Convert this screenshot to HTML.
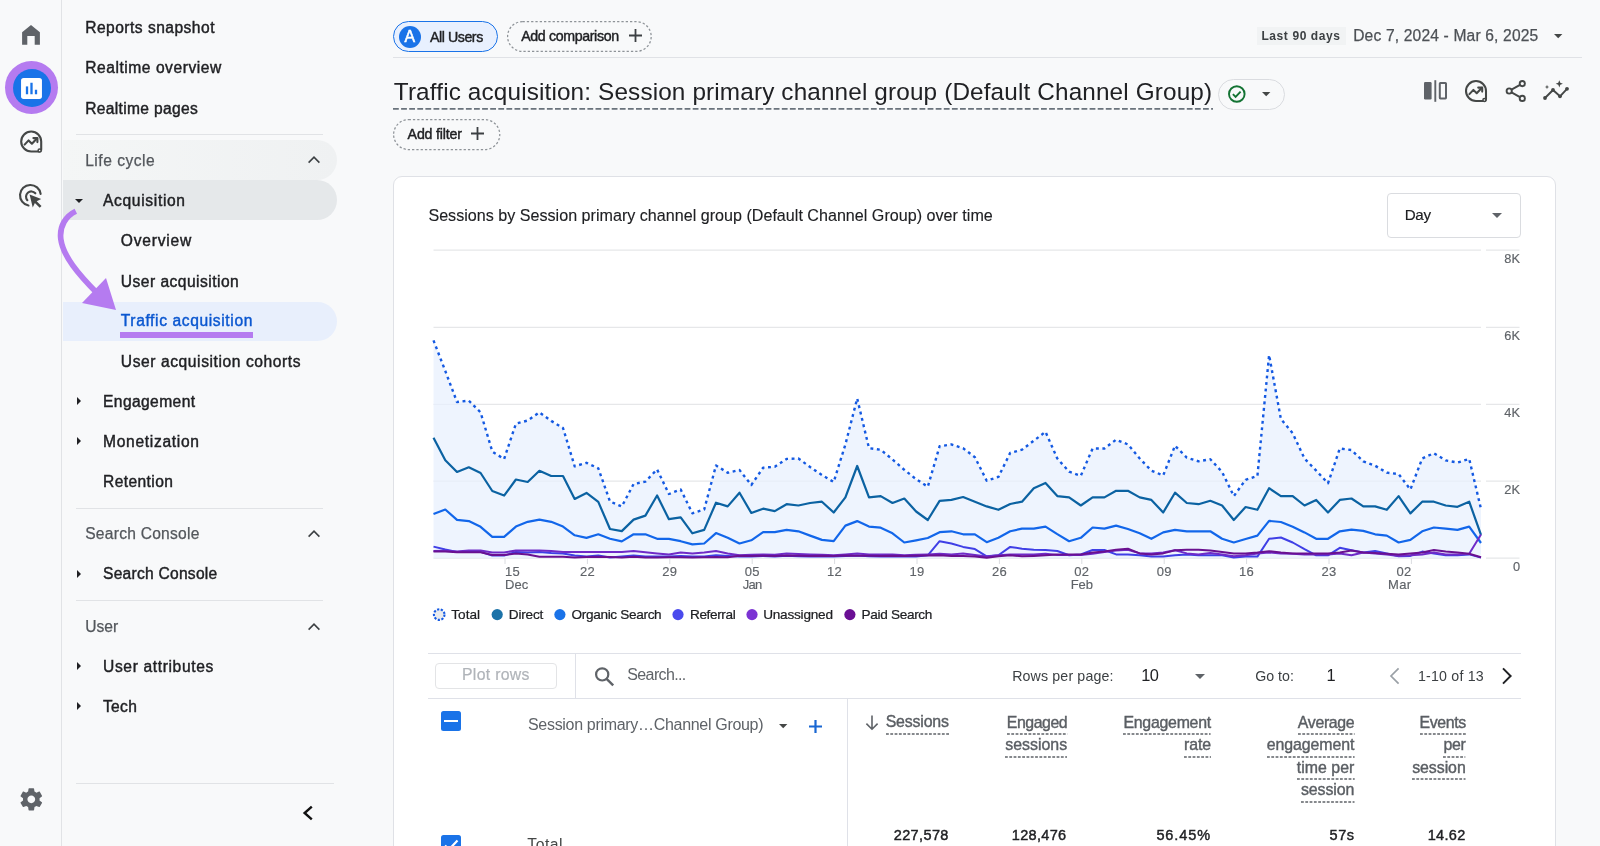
<!DOCTYPE html>
<html lang="en">
<head>
<meta charset="utf-8">
<title>Traffic acquisition</title>
<style>
*{box-sizing:border-box;margin:0;padding:0}
html,body{width:1600px;height:846px;overflow:hidden;background:#f8f9fa;font-family:"Liberation Sans",sans-serif;color:#202124}
#app{position:relative;width:1600px;height:846px;overflow:hidden;background:#f8f9fa;will-change:transform}
.abs{position:absolute}
.t{position:absolute;white-space:nowrap;line-height:1}
#rail{position:absolute;left:0;top:0;width:62.3px;height:846px;border-right:1.2px solid #e1e3e6}
.hr{position:absolute;height:1.3px;background:#e1e3e6}
.tri{position:absolute;width:0;height:0;border-style:solid}
.tri.r{border-width:4px 0 4px 4.5px;border-color:transparent transparent transparent #202124}
.tri.d{border-width:4.5px 4px 0 4px;border-color:#202124 transparent transparent transparent}
svg{overflow:visible}
</style>
</head>
<body>
<div id="app">
<div id="rail">
<svg class="abs" style="left:19px;top:23px" width="24" height="24" viewBox="0 0 24 24"><path d="M3.1 21.7V9.2L12 1.9l8.9 7.3v12.5h-5.2v-8.6H8.3v8.6z" fill="#5f6368"/></svg>
<div class="abs" style="left:5px;top:61px;width:53px;height:53px;border-radius:50%;background:#b57bf0"></div>
<div class="abs" style="left:12.5px;top:68.5px;width:38px;height:38px;border-radius:50%;background:#1a73e8"></div>
<svg class="abs" style="left:19.6px;top:76.6px" width="23" height="23" viewBox="0 0 22 22"><rect x="1" y="1" width="20" height="20" rx="2.5" fill="#fff"/><rect x="5.6" y="9" width="2.2" height="7.5" fill="#1a73e8"/><rect x="9.9" y="5.5" width="2.2" height="11" fill="#1a73e8"/><rect x="14.2" y="12.2" width="2.2" height="4.3" fill="#1a73e8"/></svg>
<svg class="abs" style="left:17px;top:127px" width="30" height="30" viewBox="17 127 30 30" fill="none" stroke="#444746" stroke-width="2.1" stroke-linecap="round" stroke-linejoin="round"><path d="M41.2 141.5a10 10 0 1 0-10 10h7.8a2.2 2.2 0 0 0 2.2-2.2z"/><path d="M24.6 144.6l4-4.2 3.3 3.3 5.2-5.4"/><path d="M33.4 138.1h4v4"/><circle cx="39.6" cy="150.6" r="1.5" fill="#f8f9fa" stroke-width="1.5"/></svg>
<svg class="abs" style="left:17.4px;top:181.6px" width="27" height="27" viewBox="0 0 24 24" fill="none" stroke="#444746" stroke-width="1.9" stroke-linecap="round"><path d="M10.2 20.9A9.2 9.2 0 1 1 21 10.6"/><path d="M9.2 16.2A4.6 4.6 0 1 1 16.3 10"/><path d="M11.2 11.2l10.3 3.9-4 1.9 4.3 4.3-1.6 1.6-4.3-4.3-1.9 4z" fill="#444746" stroke="none"/></svg>
<svg class="abs" style="left:17.8px;top:785.6px" width="26.6" height="26.6" viewBox="0 0 24 24"><path fill="#5f6368" d="M19.43 12.98c.04-.32.07-.64.07-.98s-.03-.66-.07-.98l2.11-1.65c.19-.15.24-.42.12-.64l-2-3.46c-.12-.22-.39-.3-.61-.22l-2.49 1c-.52-.4-1.08-.73-1.69-.98l-.38-2.65C14.46 2.18 14.25 2 14 2h-4c-.25 0-.46.18-.49.42l-.38 2.65c-.61.25-1.17.59-1.69.98l-2.49-1c-.23-.09-.49 0-.61.22l-2 3.46c-.13.22-.07.49.12.64l2.11 1.65c-.04.32-.07.65-.07.98s.03.66.07.98l-2.11 1.65c-.19.15-.24.42-.12.64l2 3.46c.12.22.39.3.61.22l2.49-1c.52.4 1.08.73 1.69.98l.38 2.65c.03.24.24.42.49.42h4c.25 0 .46-.18.49-.42l.38-2.65c.61-.25 1.17-.59 1.69-.98l2.49 1c.23.09.49 0 .61-.22l2-3.46c.12-.22.07-.49-.12-.64l-2.11-1.65zM12 15.5c-1.93 0-3.5-1.57-3.5-3.5s1.57-3.5 3.5-3.5 3.5 1.57 3.5 3.5-1.57 3.5-3.5 3.5z"/></svg>
</div>
<div id="nav">
<div class="abs" style="left:63px;top:140.4px;width:274px;height:39.6px;border-radius:0 20px 20px 0;background:linear-gradient(90deg,#f4f6f6,#eff1f2)"></div>
<div class="abs" style="left:63px;top:180px;width:274px;height:39.7px;border-radius:0 20px 20px 0;background:#e5e8ea"></div>
<div class="abs" style="left:63px;top:301.5px;width:274px;height:39.5px;border-radius:0 20px 20px 0;background:#e8effc"></div>
<div class="t" style="font-size:15.6px;top:20.19px;color:#202124;left:85.20px;letter-spacing:0.471px;-webkit-text-stroke:0.42px #202124;">Reports snapshot</div>
<div class="t" style="font-size:15.6px;top:60.39px;color:#202124;left:85.20px;letter-spacing:0.539px;-webkit-text-stroke:0.42px #202124;">Realtime overview</div>
<div class="t" style="font-size:15.6px;top:100.69px;color:#202124;left:85.20px;letter-spacing:0.329px;-webkit-text-stroke:0.42px #202124;">Realtime pages</div>
<div class="t" style="font-size:15.6px;top:152.69px;color:#53575c;left:85.20px;letter-spacing:0.497px;-webkit-text-stroke:0.25px #53575c;">Life cycle</div>
<div class="t" style="font-size:15.6px;top:193.19px;color:#202124;left:103.00px;letter-spacing:0.660px;-webkit-text-stroke:0.42px #202124;">Acquisition</div>
<div class="t" style="font-size:15.6px;top:233.19px;color:#202124;left:120.80px;letter-spacing:0.773px;-webkit-text-stroke:0.42px #202124;">Overview</div>
<div class="t" style="font-size:15.6px;top:273.59px;color:#202124;left:120.80px;letter-spacing:0.470px;-webkit-text-stroke:0.42px #202124;">User acquisition</div>
<div class="t" style="font-size:15.6px;top:313.49px;color:#0b57d0;left:120.80px;letter-spacing:0.615px;-webkit-text-stroke:0.42px #0b57d0;">Traffic acquisition</div>
<div class="t" style="font-size:15.6px;top:353.89px;color:#202124;left:120.80px;letter-spacing:0.580px;-webkit-text-stroke:0.42px #202124;">User acquisition cohorts</div>
<div class="t" style="font-size:15.6px;top:393.99px;color:#202124;left:103.00px;letter-spacing:0.403px;-webkit-text-stroke:0.42px #202124;">Engagement</div>
<div class="t" style="font-size:15.6px;top:434.19px;color:#202124;left:103.00px;letter-spacing:0.687px;-webkit-text-stroke:0.42px #202124;">Monetization</div>
<div class="t" style="font-size:15.6px;top:474.19px;color:#202124;left:103.00px;letter-spacing:0.402px;-webkit-text-stroke:0.42px #202124;">Retention</div>
<div class="t" style="font-size:15.6px;top:526.19px;color:#53575c;left:85.20px;letter-spacing:0.250px;-webkit-text-stroke:0.25px #53575c;">Search Console</div>
<div class="t" style="font-size:15.6px;top:566.39px;color:#202124;left:103.00px;letter-spacing:0.250px;-webkit-text-stroke:0.42px #202124;">Search Console</div>
<div class="t" style="font-size:15.6px;top:618.69px;color:#53575c;left:85.20px;letter-spacing:0.041px;-webkit-text-stroke:0.25px #53575c;">User</div>
<div class="t" style="font-size:15.6px;top:659.19px;color:#202124;left:103.00px;letter-spacing:0.637px;-webkit-text-stroke:0.42px #202124;">User attributes</div>
<div class="t" style="font-size:15.6px;top:699.19px;color:#202124;left:103.00px;letter-spacing:0.312px;-webkit-text-stroke:0.42px #202124;">Tech</div>
<div class="abs" style="left:120px;top:332.3px;width:133px;height:5.4px;background:#b57bf0"></div>
<div class="hr" style="left:76px;top:134px;width:247px"></div>
<div class="hr" style="left:76px;top:507.5px;width:247px"></div>
<div class="hr" style="left:76px;top:600px;width:247px"></div>
<div class="hr" style="left:76px;top:782.5px;width:258px"></div>
<div class="tri d" style="left:75px;top:198.5px"></div>
<div class="tri r" style="left:77px;top:397px"></div>
<div class="tri r" style="left:77px;top:437px"></div>
<div class="tri r" style="left:77px;top:570px"></div>
<div class="tri r" style="left:77px;top:662px"></div>
<div class="tri r" style="left:77px;top:702px"></div>
<svg class="abs" style="left:306px;top:154px" width="16" height="12" viewBox="0 0 16 12"><path d="M2.6 8.6L8 3.2l5.4 5.4" fill="none" stroke="#3c4043" stroke-width="1.6"/></svg>
<svg class="abs" style="left:306px;top:528px" width="16" height="12" viewBox="0 0 16 12"><path d="M2.6 8.6L8 3.2l5.4 5.4" fill="none" stroke="#3c4043" stroke-width="1.6"/></svg>
<svg class="abs" style="left:306px;top:620.5px" width="16" height="12" viewBox="0 0 16 12"><path d="M2.6 8.6L8 3.2l5.4 5.4" fill="none" stroke="#3c4043" stroke-width="1.6"/></svg>
<svg class="abs" style="left:300px;top:804px" width="16" height="18" viewBox="0 0 16 18"><path d="M11.8 2.6L4.6 9l7.2 6.4" fill="none" stroke="#111" stroke-width="2.4"/></svg>
<svg class="abs" style="left:50px;top:200px" width="80" height="120" viewBox="50 200 80 120"><path d="M75.8 211.3C66 216 59.2 226 60.8 239C63 256 78 274 98 294" fill="none" stroke="#b57bf0" stroke-width="5.7" stroke-linecap="butt"/><path d="M82 303 L106 278 L116 310 Z" fill="#b57bf0"/></svg>
</div>
<div id="main">
<div class="abs" style="left:393px;top:21.2px;width:104.6px;height:31px;border-radius:16px;border:1.7px solid #1a73e8;background:#e8f0fe"></div>
<div class="abs" style="left:398.7px;top:25.7px;width:22px;height:22px;border-radius:50%;background:#1a73e8"></div>
<div class="t" style="font-size:15.8px;top:28.83px;color:#fff;-webkit-text-stroke:0.55px #fff;left:404.4px;">A</div>
<div class="t" style="font-size:14.2px;top:29.98px;color:#202124;left:429.90px;letter-spacing:-0.423px;-webkit-text-stroke:0.4px #202124;">All Users</div>
<svg class="abs" style="left:506.6px;top:21.2px" width="144.8" height="31" viewBox="0 0 144.8 31"><rect x="0.6" y="0.6" width="143.60000000000002" height="29.8" rx="14.9" fill="none" stroke="#8e9398" stroke-width="1.25" stroke-dasharray="2.3 2"/></svg>
<div class="t" style="font-size:14.2px;top:29.18px;color:#202124;left:521.20px;letter-spacing:-0.358px;-webkit-text-stroke:0.42px #202124;">Add comparison</div>
<svg class="abs" style="left:627.5px;top:28.3px" width="15" height="15" viewBox="-1 -1 15 15"><path d="M6.5 0V13M0 6.5H13" stroke="#3c4043" stroke-width="1.8" fill="none"/></svg>
<div class="hr" style="left:393px;top:57.2px;width:1189px;height:1.2px;background:#e0e2e6"></div>
<div class="abs" style="left:1257px;top:27px;width:89px;height:17.5px;background:#f1f3f4"></div>
<div class="t" style="font-size:12px;top:30.04px;color:#3c4043;left:1261.40px;letter-spacing:0.597px;font-weight:700;">Last 90 days</div>
<div class="t" style="font-size:15.6px;top:28.09px;color:#4d5156;left:1353.20px;letter-spacing:0.163px;-webkit-text-stroke:0.25px #4d5156;">Dec 7, 2024 - Mar 6, 2025</div>
<svg class="abs" style="left:1554.0px;top:33.5px" width="8.4" height="4.2" viewBox="0 0 8.4 4.2"><path d="M0 0H8.4L4.2 4.2Z" fill="#444746"/></svg>
<div class="t" style="font-size:24.3px;top:79.93px;color:#202124;left:393.80px;letter-spacing:0.146px;">Traffic acquisition: Session primary channel group (Default Channel Group)</div>
<svg class="abs" style="left:393px;top:106.5px" width="820" height="4" viewBox="0 0 820 4"><path d="M0 1.8H820" stroke="#6a737c" stroke-width="1.8" stroke-dasharray="5.8 2.3" fill="none"/></svg>
<div class="abs" style="left:1218px;top:78.5px;width:66.5px;height:31.5px;border-radius:16px;border:1px solid #dadce0"></div>
<svg class="abs" style="left:1226px;top:83px" width="22" height="22" viewBox="0 0 22 22"><circle cx="10.8" cy="11" r="7.8" fill="none" stroke="#137333" stroke-width="1.9"/><path d="M6.9 11.2l2.7 2.7 5-5.3" fill="none" stroke="#137333" stroke-width="1.9"/></svg>
<svg class="abs" style="left:1261.6px;top:92.1px" width="8.4" height="4.2" viewBox="0 0 8.4 4.2"><path d="M0 0H8.4L4.2 4.2Z" fill="#444746"/></svg>
<svg class="abs" style="left:1423px;top:79px" width="26" height="24" viewBox="0 0 26 24"><rect x="1" y="3" width="7.6" height="17.4" rx="1.2" fill="#5f6368"/><path d="M12.3 1.2V22.8" stroke="#5f6368" stroke-width="1.9"/><rect x="16.8" y="4" width="6.2" height="15.4" rx="0.6" fill="none" stroke="#5f6368" stroke-width="2"/></svg>
<svg class="abs" style="left:1461px;top:76px" width="30" height="30" viewBox="16.2 126.5 30 30" fill="none" stroke="#444746" stroke-width="2.05" stroke-linecap="round" stroke-linejoin="round"><path d="M41.2 141.5a10 10 0 1 0-10 10h7.8a2.2 2.2 0 0 0 2.2-2.2z"/><path d="M24.6 144.6l4-4.2 3.3 3.3 5.2-5.4"/><path d="M33.4 138.1h4v4"/><circle cx="39.6" cy="150.6" r="1.5" fill="#f8f9fa" stroke-width="1.5"/></svg>
<svg class="abs" style="left:1504px;top:79px" width="24" height="24" viewBox="0 0 24 24" fill="none" stroke="#444746" stroke-width="1.9"><circle cx="18.3" cy="4.6" r="2.6"/><circle cx="5.2" cy="12" r="2.6"/><circle cx="18.3" cy="19.4" r="2.6"/><path d="M7.5 10.7l8.5-4.8M7.5 13.3l8.5 4.8"/></svg>
<svg class="abs" style="left:1540px;top:78px" width="32" height="26" viewBox="1540 78 32 26"><path d="M1545 98L1553 90L1560 96.3L1567 88.8" fill="none" stroke="#444746" stroke-width="1.9" stroke-linejoin="round"/><circle cx="1545" cy="98" r="1.9" fill="#444746"/><circle cx="1553" cy="90" r="1.9" fill="#444746"/><circle cx="1560" cy="96.3" r="1.9" fill="#444746"/><circle cx="1567" cy="88.8" r="1.9" fill="#444746"/><path d="M1559.3 80.2l1 2.6 2.6 1-2.6 1-1 2.6-1-2.6-2.6-1 2.6-1z" fill="#444746"/><path d="M1547 84.8l.6 1.6 1.6.6-1.6.6-.6 1.6-.6-1.6-1.6-.6 1.6-.6z" fill="#444746"/></svg>
<svg class="abs" style="left:393px;top:119.2px" width="107.4" height="31.2" viewBox="0 0 107.4 31.2"><rect x="0.6" y="0.6" width="106.2" height="30.0" rx="15.0" fill="none" stroke="#8e9398" stroke-width="1.25" stroke-dasharray="2.3 2"/></svg>
<div class="t" style="font-size:14.2px;top:127.08px;color:#202124;left:407.60px;letter-spacing:-0.174px;-webkit-text-stroke:0.42px #202124;">Add filter</div>
<svg class="abs" style="left:470.4px;top:126.1px" width="15" height="15" viewBox="-1 -1 15 15"><path d="M6.5 0V13M0 6.5H13" stroke="#3c4043" stroke-width="1.8" fill="none"/></svg>
<div class="abs" style="left:393px;top:176px;width:1163px;height:700px;border-radius:9px;border:1.2px solid #dfe1e6;background:#fff"></div>
<div class="t" style="font-size:16.1px;top:206.77px;color:#202124;left:428.40px;letter-spacing:0.011px;-webkit-text-stroke:0.12px #202124;">Sessions by Session primary channel group (Default Channel Group) over time</div>
<div class="abs" style="left:1386.5px;top:192.6px;width:134.5px;height:45px;border-radius:4px;border:1px solid #dadce0;background:#fff"></div>
<div class="t" style="font-size:15.2px;top:207.43px;color:#202124;left:1404.70px;letter-spacing:-0.344px;-webkit-text-stroke:0.15px #202124;">Day</div>
<svg class="abs" style="left:1491.9px;top:212.8px" width="10" height="5" viewBox="0 0 10 5"><path d="M0 0H10L5.0 5Z" fill="#5f6368"/></svg>
<svg class="abs" style="left:0;top:0" width="1600" height="640" viewBox="0 0 1600 640">
<path d="M433.5 250.2H1481M1486 250.2H1519.5" stroke="#e6e7e9" stroke-width="1.25" fill="none"/>
<path d="M433.5 327.3H1481M1486 327.3H1519.5" stroke="#e6e7e9" stroke-width="1.25" fill="none"/>
<path d="M433.5 404.3H1481M1486 404.3H1519.5" stroke="#e6e7e9" stroke-width="1.25" fill="none"/>
<path d="M433.5 481H1481M1486 481H1519.5" stroke="#e6e7e9" stroke-width="1.25" fill="none"/>
<path d="M433.5 558.2H1481M1486 558.2H1519.5" stroke="#e6e7e9" stroke-width="1.25" fill="none"/>
<path d="M505.0 558.5V564" stroke="#dadce0" stroke-width="1"/>
<path d="M587.4 558.5V564" stroke="#dadce0" stroke-width="1"/>
<path d="M669.8 558.5V564" stroke="#dadce0" stroke-width="1"/>
<path d="M752.2 558.5V564" stroke="#dadce0" stroke-width="1"/>
<path d="M834.6 558.5V564" stroke="#dadce0" stroke-width="1"/>
<path d="M917.0 558.5V564" stroke="#dadce0" stroke-width="1"/>
<path d="M999.4 558.5V564" stroke="#dadce0" stroke-width="1"/>
<path d="M1081.8 558.5V564" stroke="#dadce0" stroke-width="1"/>
<path d="M1164.2 558.5V564" stroke="#dadce0" stroke-width="1"/>
<path d="M1246.6 558.5V564" stroke="#dadce0" stroke-width="1"/>
<path d="M1329.0 558.5V564" stroke="#dadce0" stroke-width="1"/>
<path d="M1411.4 558.5V564" stroke="#dadce0" stroke-width="1"/>
<polygon points="433.5,558.2 433.5,340.4 445.3,371.0 457.0,402.0 468.8,400.6 480.6,412.4 492.3,451.6 504.1,459.0 515.9,423.7 527.7,420.5 539.4,412.4 551.2,420.9 563.0,428.0 574.7,466.3 586.5,462.8 598.3,468.3 610.0,501.5 621.8,506.5 633.6,484.0 645.4,481.6 657.1,469.4 668.9,494.0 680.7,489.5 692.4,513.3 704.2,509.5 716.0,465.4 727.7,472.8 739.5,470.0 751.3,485.0 763.1,467.7 774.8,466.8 786.6,458.9 798.4,458.5 810.1,467.0 821.9,475.0 833.7,482.0 845.4,444.4 857.2,398.5 869.0,448.2 880.7,449.7 892.5,459.5 904.3,469.8 916.1,479.2 927.8,486.7 939.6,446.3 951.4,444.4 963.1,448.2 974.9,457.2 986.7,480.7 998.4,476.9 1010.2,452.9 1022.0,449.7 1033.8,440.7 1045.5,431.8 1057.3,458.5 1069.1,471.7 1080.8,475.8 1092.6,448.5 1104.4,448.5 1116.1,439.7 1127.9,444.4 1139.7,458.5 1151.4,470.7 1163.2,475.4 1175.0,445.7 1186.8,457.6 1198.5,461.3 1210.3,459.2 1222.1,472.0 1233.8,496.1 1245.6,479.8 1257.4,476.0 1269.1,355.0 1280.9,419.0 1292.7,433.3 1304.5,458.5 1316.2,470.7 1328.0,483.3 1339.8,448.5 1351.5,450.0 1363.3,461.3 1375.1,465.7 1386.8,472.6 1398.6,474.1 1410.4,489.5 1422.2,458.5 1433.9,453.2 1445.7,460.4 1457.5,462.6 1469.2,458.9 1481.0,509.0 1481.0,558.2" fill="#e8f0fe" fill-opacity=".72"/>
<polyline points="433.5,340.4 445.3,371.0 457.0,402.0 468.8,400.6 480.6,412.4 492.3,451.6 504.1,459.0 515.9,423.7 527.7,420.5 539.4,412.4 551.2,420.9 563.0,428.0 574.7,466.3 586.5,462.8 598.3,468.3 610.0,501.5 621.8,506.5 633.6,484.0 645.4,481.6 657.1,469.4 668.9,494.0 680.7,489.5 692.4,513.3 704.2,509.5 716.0,465.4 727.7,472.8 739.5,470.0 751.3,485.0 763.1,467.7 774.8,466.8 786.6,458.9 798.4,458.5 810.1,467.0 821.9,475.0 833.7,482.0 845.4,444.4 857.2,398.5 869.0,448.2 880.7,449.7 892.5,459.5 904.3,469.8 916.1,479.2 927.8,486.7 939.6,446.3 951.4,444.4 963.1,448.2 974.9,457.2 986.7,480.7 998.4,476.9 1010.2,452.9 1022.0,449.7 1033.8,440.7 1045.5,431.8 1057.3,458.5 1069.1,471.7 1080.8,475.8 1092.6,448.5 1104.4,448.5 1116.1,439.7 1127.9,444.4 1139.7,458.5 1151.4,470.7 1163.2,475.4 1175.0,445.7 1186.8,457.6 1198.5,461.3 1210.3,459.2 1222.1,472.0 1233.8,496.1 1245.6,479.8 1257.4,476.0 1269.1,355.0 1280.9,419.0 1292.7,433.3 1304.5,458.5 1316.2,470.7 1328.0,483.3 1339.8,448.5 1351.5,450.0 1363.3,461.3 1375.1,465.7 1386.8,472.6 1398.6,474.1 1410.4,489.5 1422.2,458.5 1433.9,453.2 1445.7,460.4 1457.5,462.6 1469.2,458.9 1481.0,509.0" fill="none" stroke="#1459e2" stroke-width="2.4" stroke-dasharray="2.9 3.6" stroke-linejoin="round"/>
<polyline points="433.5,437.8 445.3,460.3 457.0,472.0 468.8,467.3 480.6,473.0 492.3,491.0 504.1,495.6 515.9,479.5 527.7,482.0 539.4,470.8 551.2,476.0 563.0,476.0 574.7,498.9 586.5,492.9 598.3,501.9 610.0,529.0 621.8,531.1 633.6,519.6 645.4,515.6 657.1,495.5 668.9,519.2 680.7,517.3 692.4,533.3 704.2,529.9 716.0,502.7 727.7,506.4 739.5,492.7 751.3,513.0 763.1,508.7 774.8,511.1 786.6,504.2 798.4,505.5 810.1,503.0 821.9,501.7 833.7,512.5 845.4,497.4 857.2,466.0 869.0,497.4 880.7,496.1 892.5,503.0 904.3,498.5 916.1,511.5 927.8,520.0 939.6,500.8 951.4,499.9 963.1,497.0 974.9,501.7 986.7,506.4 998.4,509.8 1010.2,504.0 1022.0,501.7 1033.8,488.2 1045.5,482.9 1057.3,496.1 1069.1,497.4 1080.8,505.5 1092.6,497.4 1104.4,497.4 1116.1,490.8 1127.9,490.8 1139.7,497.4 1151.4,499.9 1163.2,512.5 1175.0,492.7 1186.8,503.0 1198.5,504.2 1210.3,500.8 1222.1,505.5 1233.8,520.0 1245.6,507.0 1257.4,509.8 1269.1,488.2 1280.9,496.1 1292.7,496.1 1304.5,505.5 1316.2,499.9 1328.0,512.5 1339.8,499.9 1351.5,498.5 1363.3,506.4 1375.1,506.4 1386.8,509.8 1398.6,496.1 1410.4,513.4 1422.2,501.7 1433.9,501.7 1445.7,505.5 1457.5,506.8 1469.2,501.7 1481.0,534.8" fill="none" stroke="#0b62a2" stroke-width="2.2" stroke-linejoin="round"/>
<polyline points="433.5,514.0 445.3,509.5 457.0,519.9 468.8,521.1 480.6,526.8 492.3,536.8 504.1,536.8 515.9,526.6 527.7,521.8 539.4,519.6 551.2,521.8 563.0,526.6 574.7,535.3 586.5,537.9 598.3,534.3 610.0,538.8 621.8,541.4 633.6,534.3 645.4,534.3 657.1,538.8 668.9,538.8 680.7,541.2 692.4,544.4 704.2,543.5 716.0,533.1 727.7,537.8 739.5,543.5 751.3,540.3 763.1,532.2 774.8,532.2 786.6,529.9 798.4,531.3 810.1,535.6 821.9,539.9 833.7,541.2 845.4,525.6 857.2,521.1 869.0,526.6 880.7,527.7 892.5,533.3 904.3,542.5 916.1,540.3 927.8,538.0 939.6,532.2 951.4,531.3 963.1,534.3 974.9,534.3 986.7,542.2 998.4,537.8 1010.2,531.3 1022.0,528.6 1033.8,528.6 1045.5,526.6 1057.3,534.1 1069.1,541.2 1080.8,537.8 1092.6,527.5 1104.4,528.6 1116.1,525.6 1127.9,529.0 1139.7,533.3 1151.4,538.8 1163.2,532.4 1175.0,529.9 1186.8,531.3 1198.5,531.3 1210.3,531.3 1222.1,538.8 1233.8,542.5 1245.6,539.0 1257.4,535.6 1269.1,520.9 1280.9,522.0 1292.7,526.7 1304.5,532.4 1316.2,538.8 1328.0,538.8 1339.8,531.3 1351.5,529.6 1363.3,530.9 1375.1,534.3 1386.8,535.6 1398.6,542.5 1410.4,539.9 1422.2,531.3 1433.9,527.5 1445.7,528.6 1457.5,529.9 1469.2,526.6 1481.0,543.0" fill="none" stroke="#1266ea" stroke-width="2.2" stroke-linejoin="round"/>
<polyline points="433.5,546.6 445.3,549.5 457.0,551.9 468.8,551.5 480.6,551.9 492.3,555.6 504.1,555.6 515.9,551.9 527.7,552.6 539.4,551.9 551.2,552.9 563.0,553.4 574.7,555.6 586.5,556.4 598.3,555.6 610.0,557.4 621.8,556.4 633.6,555.6 645.4,556.4 657.1,556.4 668.9,556.6 680.7,556.0 692.4,556.4 704.2,556.6 716.0,555.2 727.7,556.0 739.5,556.6 751.3,556.4 763.1,556.0 774.8,556.4 786.6,555.8 798.4,556.2 810.1,556.6 821.9,556.4 833.7,556.6 845.4,556.0 857.2,555.6 869.0,556.2 880.7,556.4 892.5,556.4 904.3,556.6 916.1,556.4 927.8,555.3 939.6,541.2 951.4,543.5 963.1,546.9 974.9,549.1 986.7,556.3 998.4,555.3 1010.2,546.9 1022.0,548.7 1033.8,549.7 1045.5,550.0 1057.3,551.0 1069.1,555.3 1080.8,554.4 1092.6,550.0 1104.4,550.0 1116.1,554.4 1127.9,554.4 1139.7,555.3 1151.4,556.6 1163.2,556.6 1175.0,555.3 1186.8,554.4 1198.5,555.3 1210.3,555.3 1222.1,555.3 1233.8,557.6 1245.6,556.6 1257.4,556.6 1269.1,538.8 1280.9,537.5 1292.7,542.5 1304.5,549.1 1316.2,555.3 1328.0,555.3 1339.8,547.8 1351.5,550.2 1363.3,552.5 1375.1,551.0 1386.8,553.4 1398.6,556.3 1410.4,555.9 1422.2,551.6 1433.9,553.4 1445.7,555.3 1457.5,555.3 1469.2,554.4 1481.0,557.6" fill="none" stroke="#3f3fe6" stroke-width="2" stroke-linejoin="round"/>
<polyline points="433.5,551.1 445.3,550.8 457.0,551.4 468.8,550.4 480.6,550.4 492.3,552.6 504.1,552.6 515.9,550.4 527.7,550.4 539.4,550.4 551.2,551.1 563.0,551.9 574.7,551.9 586.5,551.9 598.3,551.9 610.0,551.9 621.8,551.9 633.6,551.1 645.4,552.3 657.1,553.4 668.9,554.4 680.7,552.5 692.4,553.4 704.2,552.5 716.0,551.0 727.7,553.4 739.5,555.3 751.3,554.8 763.1,554.4 774.8,554.8 786.6,553.4 798.4,554.0 810.1,554.4 821.9,554.8 833.7,555.3 845.4,554.4 857.2,553.4 869.0,554.4 880.7,554.4 892.5,554.4 904.3,555.3 916.1,554.8 927.8,554.4 939.6,553.8 951.4,554.4 963.1,553.4 974.9,554.9 986.7,556.6 998.4,555.3 1010.2,554.4 1022.0,554.4 1033.8,554.4 1045.5,553.8 1057.3,554.9 1069.1,554.9 1080.8,554.9 1092.6,553.8 1104.4,552.1 1116.1,550.6 1127.9,549.7 1139.7,553.4 1151.4,553.4 1163.2,552.5 1175.0,550.2 1186.8,553.4 1198.5,554.4 1210.3,552.9 1222.1,554.4 1233.8,556.3 1245.6,555.3 1257.4,553.4 1269.1,552.5 1280.9,553.4 1292.7,553.8 1304.5,554.4 1316.2,554.4 1328.0,554.4 1339.8,553.4 1351.5,555.3 1363.3,552.5 1375.1,553.4 1386.8,554.4 1398.6,555.9 1410.4,555.3 1422.2,554.4 1433.9,552.5 1445.7,554.4 1457.5,554.4 1469.2,553.8 1481.0,534.6" fill="none" stroke="#6f2bc8" stroke-width="2" stroke-linejoin="round"/>
<polyline points="433.5,551.4 445.3,551.4 457.0,552.3 468.8,552.3 480.6,552.3 492.3,554.9 504.1,554.9 515.9,553.4 527.7,554.4 539.4,556.8 551.2,556.8 563.0,556.8 574.7,557.4 586.5,557.1 598.3,556.8 610.0,557.1 621.8,557.4 633.6,556.8 645.4,557.4 657.1,557.4 668.9,557.2 680.7,557.2 692.4,557.4 704.2,557.2 716.0,557.0 727.7,557.2 739.5,555.7 751.3,555.9 763.1,555.7 774.8,555.9 786.6,555.5 798.4,555.7 810.1,555.9 821.9,555.7 833.7,555.9 845.4,555.5 857.2,555.7 869.0,555.7 880.7,555.9 892.5,555.7 904.3,555.9 916.1,555.7 927.8,555.5 939.6,555.3 951.4,555.9 963.1,555.9 974.9,556.6 986.7,557.8 998.4,556.3 1010.2,555.3 1022.0,556.3 1033.8,555.9 1045.5,555.3 1057.3,554.4 1069.1,554.4 1080.8,554.4 1092.6,552.5 1104.4,551.6 1116.1,549.7 1127.9,548.7 1139.7,553.4 1151.4,554.4 1163.2,553.4 1175.0,550.2 1186.8,549.7 1198.5,549.7 1210.3,550.6 1222.1,552.1 1233.8,553.4 1245.6,553.4 1257.4,552.5 1269.1,551.2 1280.9,552.5 1292.7,553.4 1304.5,553.4 1316.2,553.4 1328.0,553.4 1339.8,552.5 1351.5,550.6 1363.3,552.5 1375.1,553.1 1386.8,553.8 1398.6,554.4 1410.4,553.4 1422.2,552.5 1433.9,550.0 1445.7,551.6 1457.5,552.5 1469.2,553.8 1481.0,557.3" fill="none" stroke="#6a1090" stroke-width="2" stroke-linejoin="round"/>
</svg>
<div class="t" style="font-size:12.8px;top:253.16px;color:#5f6368;left:1504.30px;letter-spacing:0.172px;-webkit-text-stroke:0.15px #5f6368;">8K</div>
<div class="t" style="font-size:12.8px;top:330.46px;color:#5f6368;left:1504.30px;letter-spacing:0.172px;-webkit-text-stroke:0.15px #5f6368;">6K</div>
<div class="t" style="font-size:12.8px;top:407.46px;color:#5f6368;left:1504.30px;letter-spacing:0.172px;-webkit-text-stroke:0.15px #5f6368;">4K</div>
<div class="t" style="font-size:12.8px;top:484.16px;color:#5f6368;left:1504.30px;letter-spacing:0.172px;-webkit-text-stroke:0.15px #5f6368;">2K</div>
<div class="t" style="font-size:12.8px;top:560.76px;color:#5f6368;left:1512.90px;letter-spacing:0.281px;-webkit-text-stroke:0.15px #5f6368;">0</div>
<div class="t" style="font-size:13px;top:564.60px;color:#5f6368;left:505.00px;letter-spacing:0.270px;-webkit-text-stroke:0.15px #5f6368;">15</div>
<div class="t" style="font-size:13px;top:578.10px;color:#5f6368;left:505.00px;letter-spacing:0.027px;-webkit-text-stroke:0.15px #5f6368;">Dec</div>
<div class="t" style="font-size:13px;top:564.60px;color:#5f6368;left:579.90px;letter-spacing:0.270px;-webkit-text-stroke:0.15px #5f6368;">22</div>
<div class="t" style="font-size:13px;top:564.60px;color:#5f6368;left:662.30px;letter-spacing:0.270px;-webkit-text-stroke:0.15px #5f6368;">29</div>
<div class="t" style="font-size:13px;top:564.60px;color:#5f6368;left:744.70px;letter-spacing:0.270px;-webkit-text-stroke:0.15px #5f6368;">05</div>
<div class="t" style="font-size:13px;top:578.10px;color:#5f6368;left:742.70px;letter-spacing:-0.653px;-webkit-text-stroke:0.15px #5f6368;">Jan</div>
<div class="t" style="font-size:13px;top:564.60px;color:#5f6368;left:827.10px;letter-spacing:0.270px;-webkit-text-stroke:0.15px #5f6368;">12</div>
<div class="t" style="font-size:13px;top:564.60px;color:#5f6368;left:909.50px;letter-spacing:0.270px;-webkit-text-stroke:0.15px #5f6368;">19</div>
<div class="t" style="font-size:13px;top:564.60px;color:#5f6368;left:991.90px;letter-spacing:0.270px;-webkit-text-stroke:0.15px #5f6368;">26</div>
<div class="t" style="font-size:13px;top:564.60px;color:#5f6368;left:1074.30px;letter-spacing:0.270px;-webkit-text-stroke:0.15px #5f6368;">02</div>
<div class="t" style="font-size:13px;top:578.10px;color:#5f6368;left:1070.70px;letter-spacing:-0.067px;-webkit-text-stroke:0.15px #5f6368;">Feb</div>
<div class="t" style="font-size:13px;top:564.60px;color:#5f6368;left:1156.70px;letter-spacing:0.270px;-webkit-text-stroke:0.15px #5f6368;">09</div>
<div class="t" style="font-size:13px;top:564.60px;color:#5f6368;left:1239.10px;letter-spacing:0.270px;-webkit-text-stroke:0.15px #5f6368;">16</div>
<div class="t" style="font-size:13px;top:564.60px;color:#5f6368;left:1321.50px;letter-spacing:0.270px;-webkit-text-stroke:0.15px #5f6368;">23</div>
<div class="t" style="font-size:13px;top:564.60px;color:#5f6368;left:1396.40px;letter-spacing:0.270px;-webkit-text-stroke:0.15px #5f6368;">02</div>
<div class="t" style="font-size:13px;top:578.10px;color:#5f6368;left:1388.00px;letter-spacing:0.337px;-webkit-text-stroke:0.15px #5f6368;">Mar</div>
<svg class="abs" style="left:430px;top:605px" width="440" height="20" viewBox="430 605 440 20"><circle cx="439.2" cy="614.6" r="5.3" fill="#e9ebee" stroke="#1459e2" stroke-width="2.1" stroke-dasharray="2.2 1.5"/><circle cx="497.2" cy="614.6" r="5.6" fill="#1b72a8"/><circle cx="559.9" cy="614.6" r="5.6" fill="#1a73e8"/><circle cx="678" cy="614.6" r="5.6" fill="#4a4aed"/><circle cx="752" cy="614.6" r="5.6" fill="#7b33d3"/><circle cx="849.9" cy="614.6" r="5.6" fill="#6a0f94"/></svg>
<div class="t" style="font-size:13.6px;top:608.09px;color:#202124;left:451.20px;letter-spacing:0.055px;-webkit-text-stroke:0.22px #202124;">Total</div>
<div class="t" style="font-size:13.6px;top:608.09px;color:#202124;left:508.80px;letter-spacing:-0.186px;-webkit-text-stroke:0.22px #202124;">Direct</div>
<div class="t" style="font-size:13.6px;top:608.09px;color:#202124;left:571.50px;letter-spacing:-0.328px;-webkit-text-stroke:0.22px #202124;">Organic Search</div>
<div class="t" style="font-size:13.6px;top:608.09px;color:#202124;left:690.00px;letter-spacing:-0.384px;-webkit-text-stroke:0.22px #202124;">Referral</div>
<div class="t" style="font-size:13.6px;top:608.09px;color:#202124;left:763.20px;letter-spacing:-0.223px;-webkit-text-stroke:0.22px #202124;">Unassigned</div>
<div class="t" style="font-size:13.6px;top:608.09px;color:#202124;left:861.50px;letter-spacing:-0.317px;-webkit-text-stroke:0.22px #202124;">Paid Search</div>
<div class="hr" style="left:428px;top:652.6px;width:1092.5px;height:1.2px;background:#dfe1e8"></div>
<div class="hr" style="left:428px;top:697.6px;width:1092.5px;height:1.2px;background:#dfe1e8"></div>
<div class="abs" style="left:575px;top:653px;width:1.2px;height:45px;background:#dfe1e8"></div>
<div class="abs" style="left:846.8px;top:698px;width:1.2px;height:150px;background:#dfe1e8"></div>
<div class="abs" style="left:435px;top:663px;width:122px;height:26.2px;border-radius:4px;border:1px solid #e3e4e6"></div>
<div class="t" style="font-size:15.8px;top:667.43px;color:#b0b4b9;left:462.00px;letter-spacing:0.314px;-webkit-text-stroke:0.2px #b0b4b9;">Plot rows</div>
<svg class="abs" style="left:593px;top:665px" width="24" height="24" viewBox="0 0 24 24"><circle cx="9.2" cy="9.4" r="6.1" fill="none" stroke="#5f6368" stroke-width="2.2"/><path d="M13.6 13.8l6.6 6.6" stroke="#5f6368" stroke-width="2.4"/></svg>
<div class="t" style="font-size:16px;top:667.26px;color:#5f6368;left:627.30px;letter-spacing:-0.626px;">Search...</div>
<div class="t" style="font-size:14.2px;top:668.98px;color:#3c4043;left:1012.20px;letter-spacing:0.146px;">Rows per page:</div>
<div class="t" style="font-size:16.4px;top:667.42px;color:#202124;left:1141.20px;letter-spacing:-0.571px;">10</div>
<svg class="abs" style="left:1195.2px;top:673.7px" width="10" height="5" viewBox="0 0 10 5"><path d="M0 0H10L5.0 5Z" fill="#5f6368"/></svg>
<div class="t" style="font-size:14.2px;top:668.98px;color:#3c4043;left:1255.20px;letter-spacing:0.021px;">Go to:</div>
<div class="t" style="font-size:16.4px;top:667.42px;color:#202124;left:1326.40px;letter-spacing:-2.021px;">1</div>
<svg class="abs" style="left:1386px;top:666px" width="16" height="20" viewBox="0 0 16 20"><path d="M12.6 2.4L5 10l7.6 7.6" fill="none" stroke="#9aa0a6" stroke-width="1.7"/></svg>
<div class="t" style="font-size:14.2px;top:668.98px;color:#3c4043;left:1418.00px;letter-spacing:0.195px;">1-10 of 13</div>
<svg class="abs" style="left:1499px;top:666px" width="16" height="20" viewBox="0 0 16 20"><path d="M4 2.4L11.6 10 4 17.6" fill="none" stroke="#202124" stroke-width="2"/></svg>
<div class="abs" style="left:440.8px;top:711px;width:20px;height:20px;border-radius:2.5px;background:#1a73e8"></div>
<div class="abs" style="left:444px;top:719.8px;width:13.6px;height:2.4px;background:#fff"></div>
<div class="t" style="font-size:16px;top:717.26px;color:#5f6368;left:528.00px;letter-spacing:-0.312px;">Session primary…Channel Group)</div>
<svg class="abs" style="left:778.6px;top:724.1px" width="8.4" height="4.2" viewBox="0 0 8.4 4.2"><path d="M0 0H8.4L4.2 4.2Z" fill="#444746"/></svg>
<svg class="abs" style="left:807.9px;top:718.5px" width="15" height="15" viewBox="-1 -1 15 15"><path d="M6.5 0V13M0 6.5H13" stroke="#1967d2" stroke-width="2.2" fill="none"/></svg>
<svg class="abs" style="left:864px;top:714px" width="16" height="18" viewBox="0 0 16 18"><path d="M8 1.6V15M2.4 9.6L8 15.2l5.6-5.6" fill="none" stroke="#5f6368" stroke-width="1.6"/></svg>
<div class="t" style="font-size:15.9px;top:714.24px;color:#5a5e63;left:885.70px;letter-spacing:-0.177px;-webkit-text-stroke:0.4px #5a5e63;">Sessions</div><svg class="abs" style="left:885.7px;top:732.7px" width="63.1" height="2" viewBox="0 0 63.1 2"><path d="M0 1H63.1" stroke="#5f6368" stroke-width="1.5" stroke-dasharray="2.8 1.5" fill="none"/></svg>
<div class="t" style="font-size:15.9px;top:714.94px;color:#5a5e63;left:1006.80px;letter-spacing:-0.466px;-webkit-text-stroke:0.4px #5a5e63;">Engaged</div><svg class="abs" style="left:1006.8px;top:733.4px" width="60.4" height="2" viewBox="0 0 60.4 2"><path d="M0 1H60.4" stroke="#5f6368" stroke-width="1.5" stroke-dasharray="2.8 1.5" fill="none"/></svg>
<div class="t" style="font-size:15.9px;top:737.44px;color:#5a5e63;left:1005.20px;letter-spacing:0.017px;-webkit-text-stroke:0.4px #5a5e63;">sessions</div><svg class="abs" style="left:1005.2px;top:755.9px" width="62.0" height="2" viewBox="0 0 62.0 2"><path d="M0 1H62.0" stroke="#5f6368" stroke-width="1.5" stroke-dasharray="2.8 1.5" fill="none"/></svg>
<div class="t" style="font-size:15.9px;top:714.94px;color:#5a5e63;left:1123.40px;letter-spacing:-0.257px;-webkit-text-stroke:0.4px #5a5e63;">Engagement</div><svg class="abs" style="left:1123.4px;top:733.4px" width="87.6" height="2" viewBox="0 0 87.6 2"><path d="M0 1H87.6" stroke="#5f6368" stroke-width="1.5" stroke-dasharray="2.8 1.5" fill="none"/></svg>
<div class="t" style="font-size:15.9px;top:737.44px;color:#5a5e63;left:1184.00px;letter-spacing:-0.100px;-webkit-text-stroke:0.4px #5a5e63;">rate</div><svg class="abs" style="left:1184.0px;top:755.9px" width="27.0" height="2" viewBox="0 0 27.0 2"><path d="M0 1H27.0" stroke="#5f6368" stroke-width="1.5" stroke-dasharray="2.8 1.5" fill="none"/></svg>
<div class="t" style="font-size:15.9px;top:714.94px;color:#5a5e63;left:1297.80px;letter-spacing:-0.334px;-webkit-text-stroke:0.4px #5a5e63;">Average</div><svg class="abs" style="left:1297.8px;top:733.4px" width="56.6" height="2" viewBox="0 0 56.6 2"><path d="M0 1H56.6" stroke="#5f6368" stroke-width="1.5" stroke-dasharray="2.8 1.5" fill="none"/></svg>
<div class="t" style="font-size:15.9px;top:737.44px;color:#5a5e63;left:1266.80px;letter-spacing:-0.081px;-webkit-text-stroke:0.4px #5a5e63;">engagement</div><svg class="abs" style="left:1266.8px;top:755.9px" width="87.6" height="2" viewBox="0 0 87.6 2"><path d="M0 1H87.6" stroke="#5f6368" stroke-width="1.5" stroke-dasharray="2.8 1.5" fill="none"/></svg>
<div class="t" style="font-size:15.9px;top:759.84px;color:#5a5e63;left:1296.70px;letter-spacing:0.033px;-webkit-text-stroke:0.4px #5a5e63;">time per</div><svg class="abs" style="left:1296.7px;top:778.3px" width="57.7" height="2" viewBox="0 0 57.7 2"><path d="M0 1H57.7" stroke="#5f6368" stroke-width="1.5" stroke-dasharray="2.8 1.5" fill="none"/></svg>
<div class="t" style="font-size:15.9px;top:782.24px;color:#5a5e63;left:1300.90px;letter-spacing:-0.059px;-webkit-text-stroke:0.4px #5a5e63;">session</div><svg class="abs" style="left:1300.9px;top:800.7px" width="53.5" height="2" viewBox="0 0 53.5 2"><path d="M0 1H53.5" stroke="#5f6368" stroke-width="1.5" stroke-dasharray="2.8 1.5" fill="none"/></svg>
<div class="t" style="font-size:15.9px;top:714.94px;color:#5a5e63;left:1419.60px;letter-spacing:-0.418px;-webkit-text-stroke:0.4px #5a5e63;">Events</div><svg class="abs" style="left:1419.6px;top:733.4px" width="46.1" height="2" viewBox="0 0 46.1 2"><path d="M0 1H46.1" stroke="#5f6368" stroke-width="1.5" stroke-dasharray="2.8 1.5" fill="none"/></svg>
<div class="t" style="font-size:15.9px;top:737.44px;color:#5a5e63;left:1443.40px;letter-spacing:-0.227px;-webkit-text-stroke:0.4px #5a5e63;">per</div><svg class="abs" style="left:1443.4px;top:755.9px" width="22.3" height="2" viewBox="0 0 22.3 2"><path d="M0 1H22.3" stroke="#5f6368" stroke-width="1.5" stroke-dasharray="2.8 1.5" fill="none"/></svg>
<div class="t" style="font-size:15.9px;top:759.84px;color:#5a5e63;left:1412.20px;letter-spacing:-0.059px;-webkit-text-stroke:0.4px #5a5e63;">session</div><svg class="abs" style="left:1412.2px;top:778.3px" width="53.5" height="2" viewBox="0 0 53.5 2"><path d="M0 1H53.5" stroke="#5f6368" stroke-width="1.5" stroke-dasharray="2.8 1.5" fill="none"/></svg>
<div class="t" style="font-size:14.5px;top:827.53px;color:#202124;left:893.70px;letter-spacing:0.384px;-webkit-text-stroke:0.42px #202124;">227,578</div>
<div class="t" style="font-size:14.5px;top:827.53px;color:#202124;left:1011.80px;letter-spacing:0.312px;-webkit-text-stroke:0.42px #202124;">128,476</div>
<div class="t" style="font-size:14.5px;top:827.53px;color:#202124;left:1156.40px;letter-spacing:0.904px;-webkit-text-stroke:0.42px #202124;">56.45%</div>
<div class="t" style="font-size:14.5px;top:827.53px;color:#202124;left:1329.60px;letter-spacing:0.474px;-webkit-text-stroke:0.42px #202124;">57s</div>
<div class="t" style="font-size:14.5px;top:827.53px;color:#202124;left:1427.70px;letter-spacing:0.343px;-webkit-text-stroke:0.42px #202124;">14.62</div>
<div class="abs" style="left:440.8px;top:835.4px;width:20px;height:20px;border-radius:2.5px;background:#1a73e8"></div>
<svg class="abs" style="left:440.8px;top:835.4px" width="20" height="20" viewBox="0 0 20 20"><path d="M4 10.5l4 4 8.5-9" fill="none" stroke="#fff" stroke-width="2.2"/></svg>
<div class="t" style="font-size:15.8px;top:837.23px;color:#444746;left:527.30px;letter-spacing:0.465px;">Total</div>
</div>
</div>
</body>
</html>
